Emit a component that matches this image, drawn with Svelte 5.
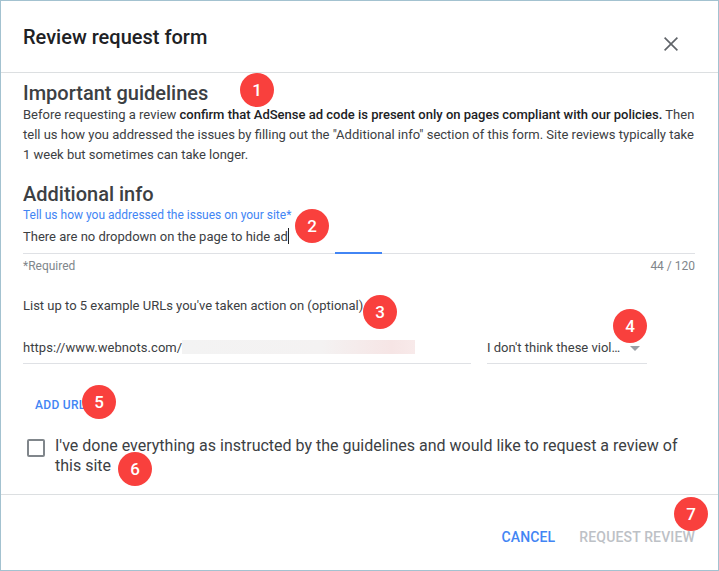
<script lang="ts">
  const badges = [
    { n: 1, x: 257, y: 90 },
    { n: 2, x: 312, y: 226 },
    { n: 3, x: 380, y: 312 },
    { n: 4, x: 630, y: 326 },
    { n: 5, x: 99, y: 402 },
    { n: 6, x: 135, y: 469 },
    { n: 7, x: 691, y: 514 }
  ];
</script>

<div class="dialog">
  <header class="head">
    <h1>Review request form</h1>
    <button class="close" aria-label="Close">
      <svg viewBox="0 0 14 14" width="14" height="14" fill="none" stroke="currentColor" stroke-width="1.6"><path d="M.6.6l12.8 12.8M13.4.6L.6 13.4"/></svg>
    </button>
  </header>

  <main class="body">
    <h2>Important guidelines</h2>
    <p class="intro">
      Before requesting a review <b>confirm that AdSense ad code is present only on pages compliant with our policies.</b> Then tell us how you addressed the issues by filling out the "Additional info" section of this form. Site reviews typically take 1 week but sometimes can take longer.
    </p>

    <h2 class="second">Additional info</h2>
    <div class="label">Tell us how you addressed the issues on your site*</div>
    <div class="textfield">
      <span>There are no dropdown on the page to hide ad</span><i class="caret"></i>
      <i class="focus"></i>
    </div>
    <div class="hints">
      <span>*Required</span>
      <span>44 / 120</span>
    </div>

    <p class="list-title">List up to 5 example URLs you've taken action on (optional)</p>

    <div class="url-row">
      <div class="url">https://www.webnots.com/<i class="smear"></i></div>
      <div class="select">
        <span>I don't think these viol…</span>
        <i class="arrow"></i>
      </div>
    </div>

    <button class="add">ADD URL</button>

    <label class="check">
      <i class="box"></i>
      <span>I've done everything as instructed by the guidelines and would like to request a review of this site</span>
    </label>
  </main>

  <footer class="foot">
    <button class="cancel">CANCEL</button>
    <button class="request" disabled>REQUEST REVIEW</button>
  </footer>

  {#each badges as b}
    <span class="badge" style="left: {b.x}px; top: {b.y}px">{b.n}</span>
  {/each}
</div>

<style>
  :global(body) {
    margin: 0;
    background: #fff;
  }

  .dialog {
    position: relative;
    width: 719px;
    height: 571px;
    box-sizing: border-box;
    border: 1px solid #a3c2d0;
    background: #fff;
    font-family: Roboto, "Liberation Sans", sans-serif;
    color: #3c4043;
    overflow: hidden;
    display: flex;
    flex-direction: column;
  }

  .head {
    height: 72px;
    flex-shrink: 0;
    box-sizing: border-box;
    border-bottom: 1px solid #dcdfe1;
    padding: 24px 40px 0 22px;
    display: flex;
    justify-content: space-between;
    align-items: flex-start;
  }

  h1 {
    margin: 0;
    font-size: 20px;
    line-height: 24px;
    font-weight: 500;
    color: #202124;
  }

  .close {
    border: none;
    background: none;
    padding: 0;
    margin-top: 12px;
    color: #5f6368;
    display: flex;
  }

  .body {
    flex: 1;
    padding: 8px 23px 0 22px;
  }

  h2 {
    margin: 0;
    font-size: 20px;
    line-height: 24px;
    font-weight: 500;
    color: #3c4043;
  }
  h2.second { margin-top: 17px; }

  .intro {
    margin: 0;
    font-size: 13px;
    line-height: 20px;
  }
  .intro b { font-weight: 500; color: #202124; }

  .label {
    font-size: 12px;
    line-height: 16px;
    color: #4285f4;
    margin-top: 1px;
  }

  .textfield {
    position: relative;
    height: 31px;
    box-sizing: border-box;
    padding-top: 4px;
    font-size: 13px;
    line-height: 20px;
    border-bottom: 1px solid #dfe1e5;
  }
  .caret {
    display: inline-block;
    width: 1px;
    height: 16px;
    background: #202124;
    vertical-align: -3px;
  }
  .focus {
    position: absolute;
    left: 312px;
    bottom: -1px;
    width: 47px;
    height: 2px;
    background: #4285f4;
  }

  .hints {
    display: flex;
    justify-content: space-between;
    font-size: 12px;
    line-height: 16px;
    color: #80868b;
    margin-top: 4px;
  }

  .list-title {
    margin: 22px 0 0;
    font-size: 13px;
    line-height: 20px;
  }

  .url-row {
    display: flex;
    gap: 16px;
    margin-top: 21px;
    padding-right: 48px;
    font-size: 13px;
    line-height: 20px;
  }

  .url, .select {
    height: 27px;
    box-sizing: border-box;
    border-bottom: 1px solid #dfe1e5;
    padding-top: 1px;
  }
  .url {
    flex: 1;
    display: flex;
    align-items: flex-start;
    letter-spacing: .05px;
  }
  .smear {
    width: 233px;
    height: 14px;
    margin-top: 2px;
    background: linear-gradient(90deg, #f3f3f3, #f4f2f2 60%, #f6e5e5 90%, #f8eaea);
  }
  .select {
    width: 160px;
    display: flex;
    justify-content: space-between;
    align-items: flex-start;
    padding-right: 7px;
  }
  .arrow {
    width: 0;
    height: 0;
    margin-top: 8px;
    border-left: 5px solid transparent;
    border-right: 5px solid transparent;
    border-top: 5px solid #9aa0a6;
  }

  button {
    font-family: inherit;
    cursor: pointer;
  }

  .add {
    display: block;
    border: none;
    background: none;
    padding: 0;
    margin: 33px 0 0 12px;
    font-size: 12px;
    line-height: 16px;
    font-weight: 500;
    letter-spacing: .3px;
    color: #4285f4;
  }

  .check {
    display: flex;
    gap: 10px;
    margin-top: 23px;
    padding-left: 4px;
    font-size: 16px;
    line-height: 20px;
    color: #3c4043;
  }
  .box {
    width: 14px;
    height: 14px;
    margin-top: 3px;
    flex-shrink: 0;
    border: 2px solid #80868b;
    border-radius: 2px;
  }

  .foot {
    height: 76px;
    flex-shrink: 0;
    box-sizing: border-box;
    border-top: 1px solid #dcdfe1;
    padding: 32px 23px 0 0;
    display: flex;
    justify-content: flex-end;
    align-items: flex-start;
    gap: 24px;
  }
  .foot button {
    border: none;
    background: none;
    padding: 0;
    font-size: 14px;
    line-height: 20px;
    font-weight: 500;
    letter-spacing: .15px;
  }
  .cancel { color: #4285f4; }
  .request { color: #bdc1c6; }

  .badge {
    position: absolute;
    width: 34px;
    height: 34px;
    margin: -18px 0 0 -18px;
    border-radius: 50%;
    background: #f9403d;
    color: #fff;
    font-size: 17px;
    font-weight: 500;
    display: flex;
    align-items: center;
    justify-content: center;
  }
</style>
